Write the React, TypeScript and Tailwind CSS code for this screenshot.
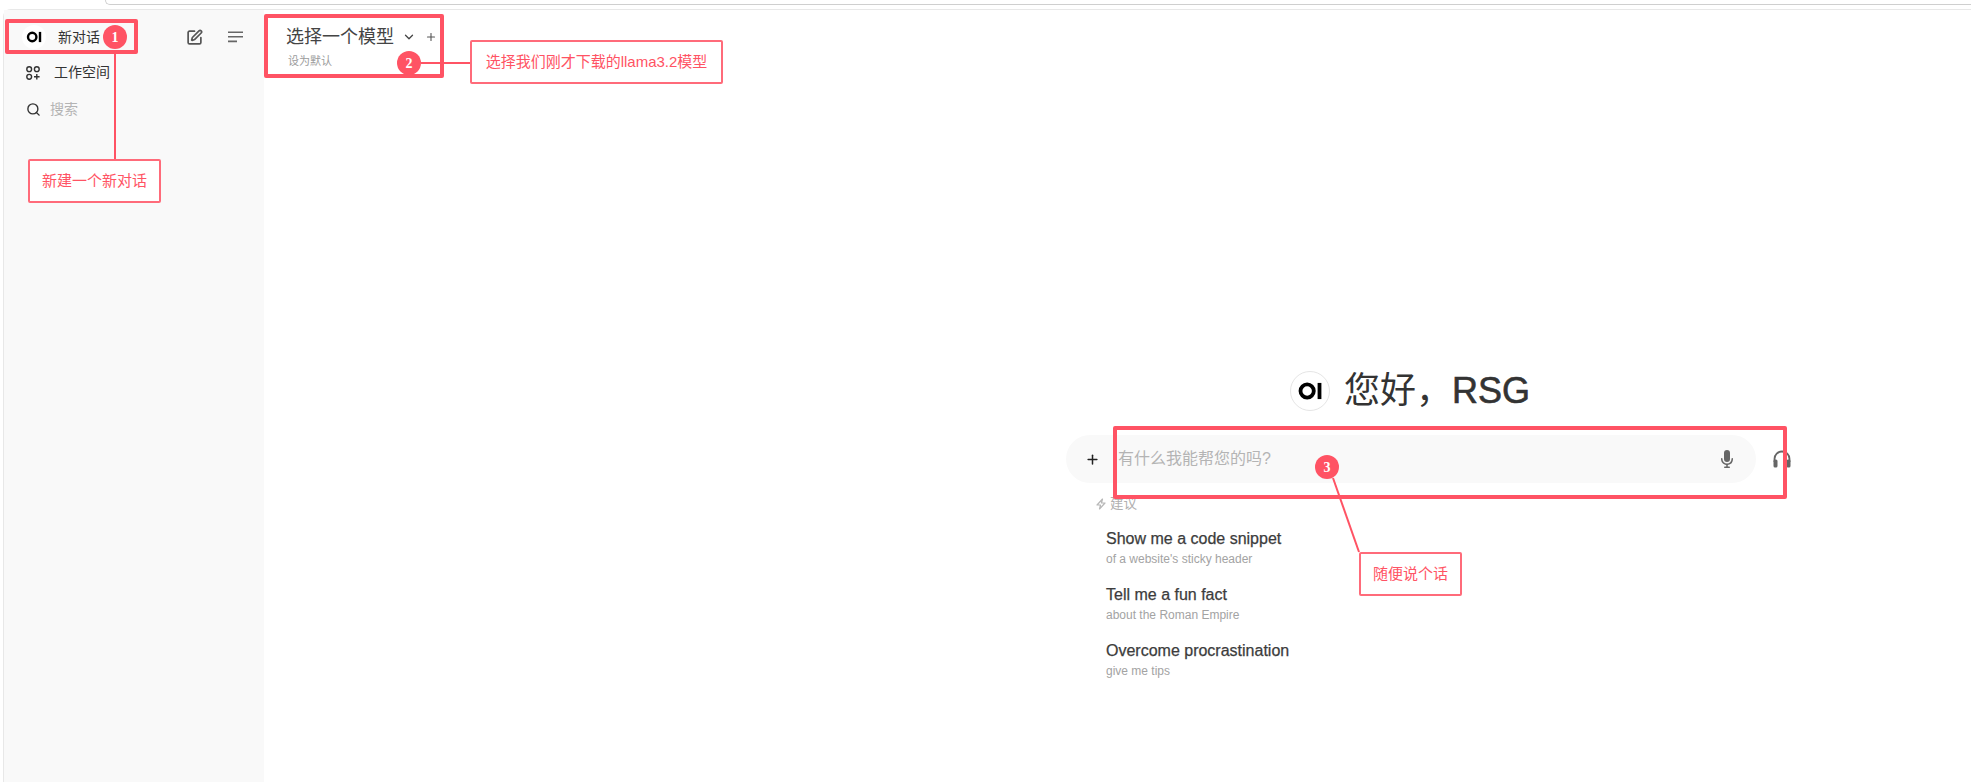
import { ChevronDown, Plus, Search, SquarePen } from 'lucide-react';

const cjk = { fontFamily: '"Liberation Sans", "Noto Sans CJK SC", sans-serif' };

const suggestions = [
  { title: 'Show me a code snippet', sub: "of a website's sticky header" },
  { title: 'Tell me a fun fact', sub: 'about the Roman Empire' },
  { title: 'Overcome procrastination', sub: 'give me tips' },
];

function Logo({ size }: { size: number }) {
  return (
    <svg width={size} height={size} viewBox="0 0 40 40" fill="none">
      <circle cx="17" cy="20" r="7" stroke="#000" strokeWidth="4" />
      <rect x="28" y="11.5" width="4" height="17" fill="#000" />
    </svg>
  );
}

function Badge({ n, className }: { n: number; className: string }) {
  return (
    <div
      className={`absolute flex h-6 w-6 items-center justify-center rounded-full bg-[#ff5364] text-[14px] font-bold text-white ${className}`}
      style={{ fontFamily: '"Liberation Serif", serif' }}
    >
      {n}
    </div>
  );
}

function Note({ text, className }: { text: string; className: string }) {
  return (
    <div
      className={`absolute flex items-center justify-center rounded-[2px] border-2 border-[#ff6b7a] bg-white text-[15px] text-[#ff5364] ${className}`}
    >
      {text}
    </div>
  );
}

export default function App() {
  return (
    <div className="relative flex h-[782px] w-[1971px] flex-col overflow-hidden bg-white" style={cjk}>
      {/* browser edge */}
      <div className="h-[9px] shrink-0 pl-[105px]">
        <div className="h-[5px] rounded-bl-[8px] border-b border-l border-[#cfcfcf]" />
      </div>

      <div className="ml-[3px] flex min-h-0 flex-1 rounded-tl-[8px] border-l border-t border-[#e8e8e8]">
        {/* Sidebar */}
        <aside className="flex w-[260px] shrink-0 flex-col bg-[#f9f9f9] pt-[9px] text-[14px] text-[#333]">
          <div className="flex h-9 items-center pl-[18px] pr-[20px]">
            <div className="flex h-6 w-6 items-center justify-center rounded-full bg-white">
              <Logo size={24} />
            </div>
            <span className="ml-[12px]">新对话</span>
            <SquarePen className="ml-auto h-[17px] w-[17px] text-[#555]" strokeWidth={2.4} />
            <svg className="ml-[24px]" width="17" height="12" viewBox="0 0 17 12" fill="none" stroke="#666" strokeWidth="1.6">
              <path d="M1 1.2h15M1 5.8h15M1 10.4h9" />
            </svg>
          </div>
          <div className="flex h-[35px] items-center pl-[22px]">
            <svg width="14" height="14" viewBox="0 0 14 14" fill="none" stroke="#333" strokeWidth="1.4">
              <circle cx="3.2" cy="3.2" r="2.4" />
              <circle cx="10.8" cy="3.2" r="2.4" />
              <circle cx="3.2" cy="10.8" r="2.4" />
              <path d="M10.8 8v5.6M8 10.8h5.6" />
            </svg>
            <span className="ml-[14px]">工作空间</span>
          </div>
          <div className="mt-[1px] flex h-9 items-center pl-[22px] text-[#b4b4b4]">
            <Search className="h-[15px] w-[15px] text-[#333]" strokeWidth={2.2} />
            <span className="ml-[9px]">搜索</span>
          </div>
        </aside>

        {/* Main */}
        <main className="min-w-0 flex-1 bg-white">
          <header className="pl-[22px] pt-[15px]">
            <div className="flex h-6 items-center text-[18px] text-[#444]">
              <span>选择一个模型</span>
              <ChevronDown className="ml-[8px] h-[14px] w-[14px] text-[#444]" strokeWidth={2.2} />
              <Plus className="ml-[9px] h-[12px] w-[12px] text-[#555]" strokeWidth={2.2} />
            </div>
            <div className="ml-[2px] mt-[4px] text-[11px] leading-4 text-[#9b9b9b]">设为默认</div>
          </header>

          <div className="ml-[802px] mt-[302px] w-[730px]">
            <div className="ml-[224px] flex h-10 items-center">
              <div className="flex h-10 w-10 items-center justify-center rounded-full border border-[#e5e5e5] bg-white">
                <Logo size={38} />
              </div>
              <h1 className="ml-[14px] text-[36px] leading-10 text-[#333]">
                您好，<span className="[-webkit-text-stroke:0.6px_#333]">RSG</span>
              </h1>
            </div>

            <div className="mt-[24px] flex items-center">
              <div className="flex h-12 w-[690px] items-center rounded-[24px] bg-[#f9f9f9] pl-[19px] pr-[19px]">
                <Plus className="h-[15px] w-[15px] text-[#222]" strokeWidth={2.4} />
                <span className="ml-[18px] text-[16px] text-[#b4b4b4]">有什么我能帮您的吗?</span>
                <svg className="ml-auto" width="20" height="20" viewBox="0 0 20 20" fill="#666">
                  <path d="M7 4a3 3 0 0 1 6 0v6a3 3 0 1 1-6 0V4Z" />
                  <path d="M5.5 9.643a.75.75 0 0 0-1.5 0V10c0 3.06 2.29 5.585 5.25 5.954V17.5h-1.5a.75.75 0 0 0 0 1.5h4.5a.75.75 0 0 0 0-1.5h-1.5v-1.546A6.001 6.001 0 0 0 16 10v-.357a.75.75 0 0 0-1.5 0V10a4.5 4.5 0 0 1-9 0v-.357Z" />
                </svg>
              </div>
              <svg className="ml-[16px]" width="20" height="20" viewBox="0 0 20 20" fill="none">
                <path d="M2.5 13V10a7.5 7.5 0 0 1 15 0v3" stroke="#666" strokeWidth="1.8" />
                <rect x="1.5" y="10.5" width="4" height="8" rx="1.5" fill="#666" />
                <rect x="14.5" y="10.5" width="4" height="8" rx="1.5" fill="#666" />
              </svg>
            </div>

            <div className="ml-[29px] mt-[12px] flex h-[18px] items-center text-[13.5px] text-[#b0b0b0]">
              <svg width="12" height="12" viewBox="0 0 12 12" fill="none" stroke="#b8b8b8" strokeWidth="1.2" strokeLinejoin="round">
                <path d="M7.5 1 2 7h3.5L4.5 11 10 5H6.5Z" />
              </svg>
              <span className="ml-[3px]">建议</span>
            </div>

            <div className="ml-[40px] mt-[15px] flex flex-col gap-[15px]">
              {suggestions.map((s) => (
                <div key={s.title} className="h-[41px]">
                  <div className="text-[16px] leading-[22px] text-[#3c3c3c] [-webkit-text-stroke:0.25px_#3c3c3c]">{s.title}</div>
                  <div className="text-[12px] leading-[19px] text-[#a3a3a3]">{s.sub}</div>
                </div>
              ))}
            </div>
          </div>
        </main>
      </div>

      {/* Annotations */}
      <div className="pointer-events-none absolute left-[5px] top-[19px] h-[35px] w-[133px] rounded-[2px] border-4 border-[#ff5364]" />
      <div className="pointer-events-none absolute left-[264px] top-[14px] h-[64px] w-[180px] rounded-[2px] border-4 border-[#ff5364]" />
      <div className="pointer-events-none absolute left-[1113px] top-[426px] h-[73px] w-[674px] rounded-[2px] border-4 border-[#ff5364]" />

      <svg className="pointer-events-none absolute left-0 top-0" width="1971" height="782" fill="none" stroke="#ff5364" strokeWidth="2">
        <path d="M115 54V159" />
        <path d="M421 63H470" />
        <path d="M1333 478L1359 552" />
      </svg>

      <Badge n={1} className="left-[103px] top-[25px]" />
      <Badge n={2} className="left-[397px] top-[51px]" />
      <Badge n={3} className="left-[1315px] top-[455px]" />

      <Note text="新建一个新对话" className="left-[28px] top-[159px] h-[44px] w-[133px]" />
      <Note text="选择我们刚才下载的llama3.2模型" className="left-[470px] top-[40px] h-[44px] w-[253px]" />
      <Note text="随便说个话" className="left-[1359px] top-[552px] h-[44px] w-[103px]" />
    </div>
  );
}
